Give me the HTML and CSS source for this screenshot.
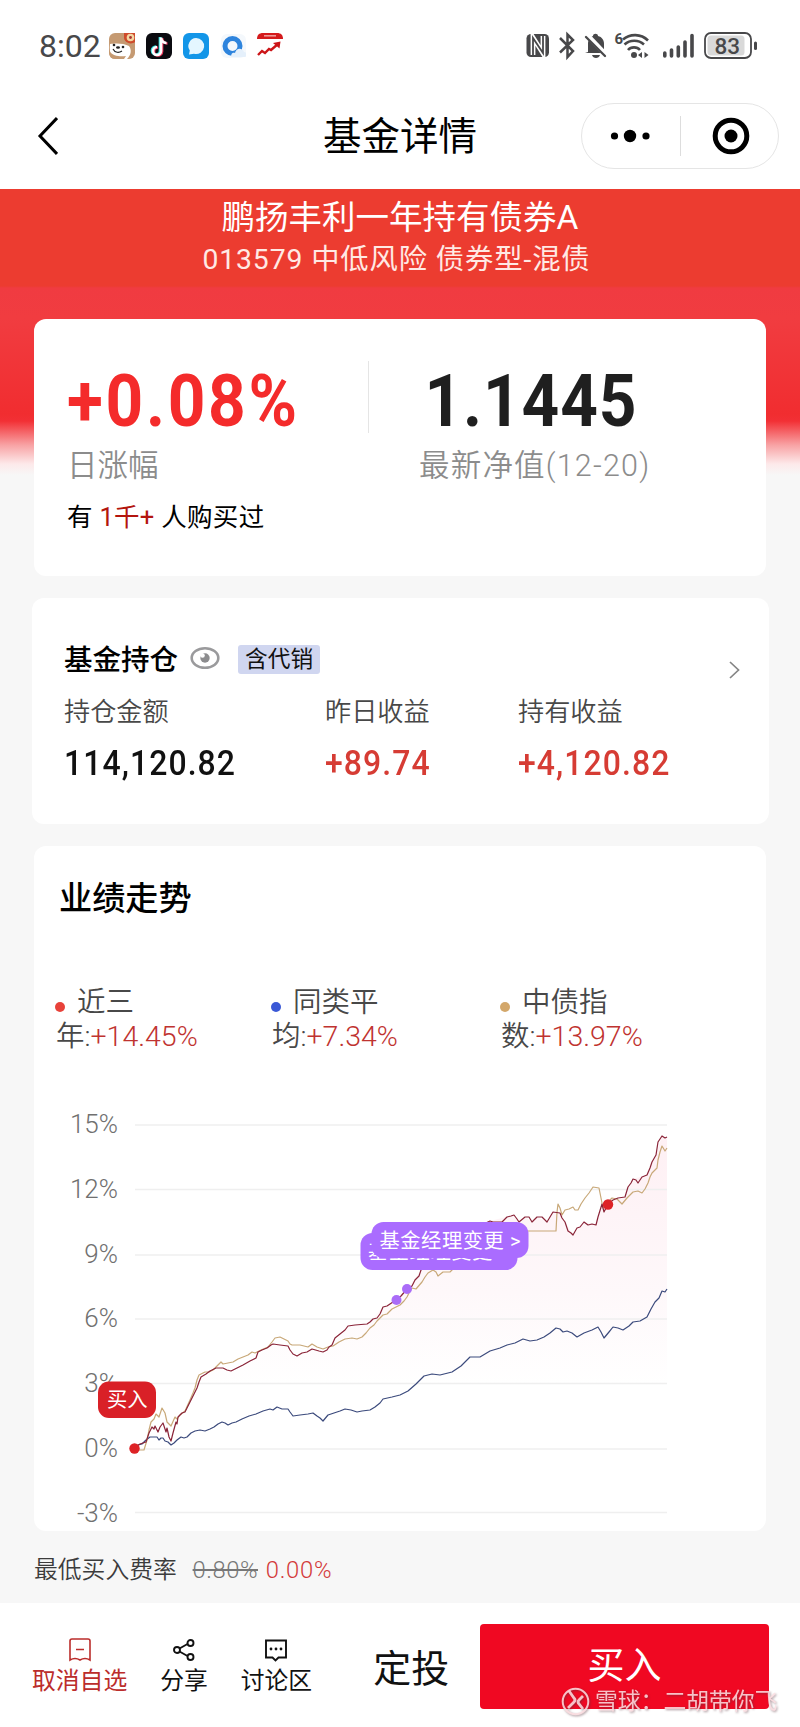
FILE: index.html
```html
<!DOCTYPE html>
<html lang="zh-CN">
<head>
  <meta charset="UTF-8" />
  <meta name="viewport" content="width=device-width, initial-scale=1.0"/>
  <title>基金详情</title>
  <link rel="stylesheet" href="styles.css">
</head>
<body>
  <div class="status">
    <span class="time">8:02</span>
    <div class="apps">
      <svg width="26" height="26" viewBox="0 0 26 26">
        <rect width="26" height="26" rx="6" fill="#c59a72"/>
        <path d="M1 11c5-1 14-1 19 2 3 4 2 9-2 13H7c-4-1-7-5-6-15z" fill="#fff"/>
        <path d="M0 18c4 5 11 6 17 5l-2 3H6c-4 0-6-3-6-8z" fill="#c59a72"/>
        <path d="M15 0h11v9c-4 3-10 1-11-4z" fill="#cf4a2b"/>
        <circle cx="21.500" cy="4.500" r="3.800" fill="#f3d6a0"/>
        <circle cx="21.500" cy="4.500" r="1.400" fill="#a33"/>
        <circle cx="5" cy="12" r="1.300" fill="#222"/><circle cx="14" cy="14" r="1.300" fill="#222"/>
        <ellipse cx="9" cy="14.500" rx="2" ry="1.300" fill="#222"/>
        <path d="M4 16c2 4 6 4 9 2" fill="none" stroke="#222" stroke-width="1.200"/>
      </svg>
      <svg width="26" height="26" viewBox="0 0 26 26">
        <rect width="26" height="26" rx="6" fill="#0b0b10"/>
        <g fill="none" stroke-width="2.700">
          <path d="M14 4v13.500a4 4 0 1 1-4-4M14 4c0 3 2.500 5.500 5.500 5.500" stroke="#35e0e0"/>
          <path d="M16 5v13.500a4 4 0 1 1-4-4M16 5c0 3 2.500 5.500 5.500 5.500" stroke="#f0355c"/>
          <path d="M15 4.500V18a4 4 0 1 1-4-4M15 4.500c0 3 2.500 5.500 5.500 5.500" stroke="#fff"/>
        </g>
      </svg>
      <svg width="26" height="26" viewBox="0 0 26 26">
        <rect width="26" height="26" rx="6" fill="#1396e8"/>
        <path d="M13 5a8 8 0 1 1-2 15.700L6 21.500l.800-4A8 8 0 0 1 13 5z" fill="#e4f6ff"/>
      </svg>
      <svg width="26" height="26" viewBox="0 0 26 26">
        <rect x="1" y="1" width="25" height="24" rx="6" fill="#f4f8fc"/>
        <circle cx="12.500" cy="13" r="7.500" fill="none" stroke="#2e84dd" stroke-width="5"/>
        <path d="M11 24c0-4 2-5 4-4 1-5 7-6 9-1 3 0 4 4 1 5z" fill="#e5f0fb"/>
      </svg>
      <svg width="26" height="26" viewBox="0 0 26 26">
        <path d="M0 6c0-4 2-6 6-6h14c4 0 6 2 6 6z" fill="#d41a1c"/>
        <path d="M7 2.800h12" stroke="#f1a3a0" stroke-width="1.500"/>
        <path d="M1 22l4-4 3 2 4-4 2 1 7-6" fill="none" stroke="#cc1518" stroke-width="2.400"/>
        <path d="M16 10l7.500-1.500-1 7z" fill="#cc1518"/>
      </svg>
    </div>
    <svg class="signals" width="234" height="32" viewBox="524 30 234 32">
      <rect x="526.500" y="34" width="22.500" height="23" rx="4.500" fill="#48484a"/>
      <path d="M533 55V37.500l10 16V36" fill="none" stroke="#fff" stroke-width="4.800"/>
      <path d="M533 56V38l10 15V35" fill="none" stroke="#48484a" stroke-width="1.800"/>
      <path d="M560 38l13 13-5.500 6V34.500l5.500 5.500-13 12.500" fill="none" stroke="#48484a" stroke-width="2.500"/>
      <path d="M588 52v-8c0-4 2-7 5-8 0-3 5-3 5 0 4 1 6 4 6 8v6l2 3h-21zM592 55h8c-1 4-7 4-8 0z" fill="#48484a"/>
      <path d="M587 35l20 21" stroke="#fff" stroke-width="5"/>
      <path d="M586 37l19 19" stroke="#48484a" stroke-width="2.300" stroke-linecap="round"/>
      <text x="614.500" y="44" class="wifi-gen">6</text>
      <g fill="none" stroke="#48484a" stroke-width="2.600">
        <path d="M623 39.500c7-6 18-6 25 1M624.500 44.500c5.500-5 14-5 19.500 0M628 50c3-3.500 9-3.500 12 0"/>
      </g>
      <circle cx="634" cy="55" r="3" fill="#48484a"/>
      <path d="M642 52v6l-4-3zM644.500 52v6l4-3z" fill="#48484a"/>
      <g stroke="#48484a" stroke-width="3.600" stroke-linecap="round">
        <path d="M664.800 53v3M671.500 50v6M678.300 47v9M685 42v14M692 35.500v20.500"/>
      </g>
      <rect x="705" y="33" width="46" height="25" rx="6" fill="#fff" stroke="#48484a" stroke-width="1.800"/>
      <rect x="707.500" y="35.500" width="37" height="20" rx="3.500" fill="#d9d9d9"/>
      <path d="M755.500 43v5.500" stroke="#48484a" stroke-width="3" stroke-linecap="round"/>
      <text x="714.500" y="54" class="battery">83</text>
    </svg>
  </div>

  <header class="nav">
    <svg class="back" width="22" height="40" viewBox="0 0 22 40"><path d="M21 2L4 20l17 18" fill="none" stroke="#000" stroke-width="3"/></svg>
    <h1>基金详情</h1>
    <div class="capsule">
      <svg width="40" height="14" viewBox="0 0 40 14"><circle cx="4.500" cy="7" r="3.600"/><circle cx="20" cy="7" r="6.200"/><circle cx="36" cy="7" r="3.600"/></svg>
      <span class="capsule-line"></span>
      <svg width="38" height="38" viewBox="0 0 38 38"><circle cx="19" cy="19" r="15.800" fill="none" stroke="#000" stroke-width="5"/><circle cx="19" cy="19" r="6.500"/></svg>
    </div>
  </header>

  <main>
    <div class="fund">
      <h2>鹏扬丰利一年持有债券A</h2>
      <p>013579 中低风险 债券型-混债</p>
    </div>

    <section class="card quote">
      <div class="quote-row">
        <div class="change">
          <strong>+0.08%</strong>
          <span>日涨幅</span>
        </div>
        <i class="quote-line"></i>
        <div class="net">
          <strong>1.1445</strong>
          <span>最新净值(12-20)</span>
        </div>
      </div>
      <p class="bought">有 <b>1千+</b> 人购买过</p>
    </section>

    <section class="card holding">
      <div class="holding-head">
        <h3>基金持仓</h3>
        <svg class="eye" width="30" height="24" viewBox="0 0 30 24">
          <ellipse cx="15" cy="12" rx="13.300" ry="9.800" fill="none" stroke="#9a9a9c" stroke-width="2.600"/>
          <circle cx="15" cy="12" r="4.700" fill="#8c8c8e"/><circle cx="12.500" cy="9.500" r="2.300" fill="#fff"/>
        </svg>
        <span class="tag">含代销</span>
      </div>
      <div class="holding-grid">
        <div><span>持仓金额</span><b>114,120.82</b></div>
        <div><span>昨日收益</span><b class="up">+89.74</b></div>
        <div><span>持有收益</span><b class="up">+4,120.82</b></div>
      </div>
      <svg class="more" width="12" height="18" viewBox="0 0 12 18"><path d="M2 1l8.500 8L2 17" fill="none" stroke="#858585" stroke-width="1.700"/></svg>
    </section>

    <section class="card trend">
      <h3>业绩走势</h3>
      <div class="legend">
        <p><i class="dot red"></i>近三<br>年:<b>+14.45%</b></p>
        <p><i class="dot blue"></i>同类平<br>均:<b>+7.34%</b></p>
        <p><i class="dot gold"></i>中债指<br>数:<b>+13.97%</b></p>
      </div>
      <svg class="chart" width="732" height="478" viewBox="34 1053 732 478">
        <defs>
          <linearGradient id="area" x1="0" y1="0" x2="0" y2="1">
            <stop offset="0" stop-color="#fef0f4"/>
            <stop offset=".5" stop-color="#fef8fa"/>
            <stop offset=".8" stop-color="#fff"/>
          </linearGradient>
        </defs>
        <path fill="url(#area)" d="M134 1448L146 1442 152 1427 163 1423 171 1441 178 1417 190 1402 201 1377 216 1368 231 1371 256 1358 273 1344 288 1346 297 1356 312 1349 323 1352 332 1345 348 1326 367 1324 383 1307 396 1300 407 1289 421 1270 450 1240 490 1221 514 1215 519 1222 525 1217 532 1222 537 1217 547 1222 553 1212 560 1213 573 1235 584 1222 596 1225 602 1204 625 1197 633 1179 647 1175 656 1155 662 1136 667 1138V1448z"/>
        <g stroke="#efefef" stroke-width="1.500">
          <path d="M135 1125H667M135 1189.500H667M135 1255H667M135 1319H667M135 1383.500H667M135 1449H667M135 1512.500H667"/>
        </g>
        <g class="axis">
          <text x="118" y="1133">15%</text>
          <text x="118" y="1198">12%</text>
          <text x="118" y="1263">9%</text>
          <text x="118" y="1327">6%</text>
          <text x="118" y="1392">3%</text>
          <text x="118" y="1457">0%</text>
          <text x="118" y="1522">-3%</text>
        </g>
        <polyline class="line-blue" points="134,1448 138,1445 142,1444 146,1440 150,1437 157,1437 159,1440 161,1438 163,1438 165,1441 168,1442 171,1445 174,1443 177,1440 181,1437 184,1438 187,1437 191,1433 195,1431 200,1430 205,1431 210,1429 214,1427 218,1424 222,1422 225,1423 228,1425 232,1423 236,1422 242,1419 249,1416 256,1414 263,1411 270,1409 273,1410 277,1407 282,1409 288,1409 290,1412 293,1416 300,1415 308,1414 313,1413 317,1416 320,1418 323,1421 328,1415 334,1413 340,1411 345,1409 351,1410 357,1412 362,1411 370,1410 375,1407 380,1403 383,1399 392,1397 400,1395 408,1391 416,1384 424,1376 432,1374 440,1375 452,1372 461,1366 470,1357 480,1357 490,1351 500,1348 507,1345 515,1343 523,1339 530,1341 537,1340 544,1337 550,1333 556,1328 560,1329 563,1332 567,1331 572,1333 577,1337 584,1333 592,1330 598,1327 601,1332 604,1338 609,1332 613,1327 618,1328 623,1330 629,1326 633,1322 640,1321 647,1317 651,1309 655,1302 659,1298 662,1291 665,1292 667,1289"/>
        <polyline class="line-gold" points="134,1448 139,1450 144,1450 147,1440 149,1430 151,1422 154,1419 156,1414 159,1417 162,1408 165,1413 167,1422 171,1426 175,1417 177,1419 180,1415 185,1411 190,1400 193,1393 195,1388 197,1380 199,1375 205,1372 209,1372 213,1370 217,1366 221,1362 223,1364 228,1363 233,1362 238,1359 243,1357 248,1355 252,1352 255,1353 261,1350 268,1347 272,1342 275,1338 280,1337 284,1339 288,1341 290,1344 292,1345 300,1345 308,1347 312,1344 317,1347 323,1349 328,1347 333,1346 339,1342 345,1339 352,1338 357,1339 362,1337 366,1333 370,1328 374,1325 377,1321 383,1315 387,1314 392,1309 400,1305 404,1301 407,1297 410,1291 412,1288 416,1289 422,1282 425,1277 428,1273 433,1270 436,1272 438,1276 443,1272 450,1272 455,1267 490,1231 556,1231 557,1212 558,1204 560,1208 562,1215 565,1210 569,1209 573,1207 575,1210 578,1210 581,1204 585,1198 589,1193 593,1187 599,1188 601,1198 603,1208 607,1203 612,1198 617,1199 622,1204 627,1198 633,1192 638,1191 642,1193 645,1189 648,1183 650,1177 652,1173 657,1168 658,1160 660,1152 662,1146 665,1151 667,1148"/>
        <polyline class="line-red" points="134,1448 140,1444 146,1442 149,1433 152,1427 154,1429 155,1426 158,1432 160,1427 163,1423 166,1432 167,1428 169,1437 171,1441 173,1433 176,1422 177,1424 178,1417 182,1413 185,1412 187,1408 190,1402 194,1394 197,1388 199,1382 201,1377 206,1374 210,1371 216,1368 223,1368 227,1370 231,1371 237,1368 243,1365 250,1361 256,1358 258,1352 262,1350 267,1348 271,1345 273,1344 280,1345 288,1346 290,1350 293,1354 297,1356 302,1353 307,1352 312,1349 319,1351 323,1352 327,1350 329,1347 332,1345 335,1338 340,1334 345,1330 348,1326 355,1325 367,1324 370,1322 373,1319 377,1318 380,1314 383,1307 387,1306 390,1304 396,1300 401,1296 407,1289 412,1286 415,1280 419,1276 421,1270 428,1262 450,1240 490,1221 493,1222 502,1222 507,1217 511,1216 514,1215 517,1219 519,1222 525,1217 529,1217 532,1222 537,1217 542,1217 547,1222 550,1217 553,1212 560,1213 562,1218 565,1222 568,1231 571,1233 573,1235 577,1228 580,1227 584,1222 588,1225 592,1224 596,1225 598,1217 602,1204 604,1212 608,1204 613,1200 618,1198 625,1197 628,1187 631,1183 633,1179 636,1180 638,1183 642,1177 647,1175 650,1168 652,1162 656,1155 658,1142 662,1136 665,1138 667,1137"/>
        <circle cx="396.500" cy="1300" r="5" fill="#aa6cf8"/>
        <circle cx="407" cy="1289" r="5" fill="#aa6cf8"/>
        <circle cx="608" cy="1204.500" r="5.200" fill="#dd2226"/>
        <circle cx="134.500" cy="1448.500" r="5.200" fill="#dd2226"/>
        <rect x="360.500" y="1233" width="157" height="37" rx="12" fill="#aa6cff"/>
        <text class="pill" x="368" y="1258.500" textLength="141">基金经理变更 &gt;</text>
        <rect x="371.500" y="1222" width="157" height="36" rx="12" fill="#aa6cff"/>
        <text class="pill" x="379.500" y="1247.500" textLength="141">基金经理变更 &gt;</text>
        <rect x="98" y="1381.500" width="58" height="36.500" rx="11" fill="#d92027"/>
        <text class="pill" x="107" y="1407">买入</text>
      </svg>
    </section>

    <p class="fee">最低买入费率 <del>0.80%</del> <b>0.00%</b></p>
  </main>

  <footer class="bar">
    <a class="act fav">
      <svg width="24" height="26" viewBox="0 0 24 26"><path d="M4 2h16q2 0 2 2v19q-5-3-10 0-5-3-10 0V4q0-2 2-2zM8 12.500h8" fill="none" stroke="currentColor" stroke-width="1.600"/></svg>
      取消自选
    </a>
    <a class="act share">
      <svg width="24" height="26" viewBox="0 0 24 26"><g fill="none" stroke="currentColor" stroke-width="1.900"><path d="M7.500 11.500l8-4.500M7.500 14.500l8 4.500"/><circle cx="5" cy="13" r="3"/><circle cx="18.500" cy="6" r="3"/><circle cx="18.500" cy="20" r="3"/></g></svg>
      分享
    </a>
    <a class="act talk">
      <svg width="24" height="26" viewBox="0 0 24 26"><path d="M2 3.500h20v17h-7.500l-3 3-3-3H2z" fill="none" stroke="currentColor" stroke-width="1.900"/><g fill="currentColor"><circle cx="7" cy="12" r="1.400"/><circle cx="12" cy="12" r="1.400"/><circle cx="17" cy="12" r="1.400"/></g></svg>
      讨论区
    </a>
    <a class="plan">定投</a>
    <button class="buy">买入</button>
    <div class="watermark">
      <svg width="29" height="29" viewBox="0 0 29 29"><g fill="none" stroke="currentColor" stroke-width="2"><circle cx="14.500" cy="14.500" r="12.800"/><path d="M8 4l5 7q2 2 0 4l-6 6M22 9l-4 4q-2 2 0 4l4 5" stroke-width="2.800"/></g></svg>
      <span>雪球：二胡带你飞</span>
    </div>
  </footer>
</body>
</html>
```
FILE: styles.css
```css
* {
  box-sizing: border-box;
}
body {
  margin: 0;
  width: 800px;
  background: #f7f7f7;
  color: #111;
  font-family: Roboto, "Noto Sans CJK SC", sans-serif;
}
h1, h2, h3, p {
  margin: 0;
  font-weight: 400;
}
b, i {
  font-weight: 400;
  font-style: normal;
}
svg {
  display: block;
  flex-shrink: 0;
}

/* status bar */
.status {
  display: flex;
  align-items: center;
  height: 92px;
  padding: 0 42px 0 39px;
  background: #fff;
}
.time {
  width: 70px;
  font-size: 32px;
  color: #48484a;
  line-height: 40px;
}
.apps {
  display: flex;
  gap: 10.900px;
}
.signals {
  margin-left: auto;
}
.wifi-gen {
  font-size: 15px;
  font-weight: 700;
  fill: #48484a;
}
.battery {
  font-size: 22.500px;
  font-weight: 500;
  fill: #48484a;
}

/* nav */
.nav {
  display: grid;
  grid-template-columns: 198px 1fr 198px;
  align-items: center;
  height: 97px;
  padding: 0 21px 10px 36px;
  background: #fff;
}
.nav h1 {
  padding: 2px 15px 0 0;
  text-align: center;
  font-size: 38.500px;
  line-height: 50px;
  color: #000;
}
.capsule {
  display: flex;
  align-items: center;
  width: 198px;
  height: 66px;
  padding: 0 28px;
  border: 1px solid #e5e5e5;
  border-radius: 33px;
}
.capsule-line {
  width: 1px;
  height: 40px;
  margin: 0 31px 0 30px;
  background: #ddd;
}

/* fund name */
main {
  padding: 0 34px;
  background: linear-gradient(#ec3c30 0, #ec3c30 97px, #f03b41 99px, #f13c40 130px, #f12d30 225px, #f23035 232px, #f8a2a4 256px, #fde9ea 275px, #f7f7f7 286px);
}
.fund {
  height: 130px;
  padding-top: 6px;
  text-align: center;
  color: #fff;
}
.fund h2 {
  font-size: 33.500px;
  line-height: 45px;
}
.fund p {
  padding-right: 7px;
  font-size: 28.300px;
  line-height: 40px;
  letter-spacing: .900px;
  color: #ffe9e4;
}

/* cards */
.card {
  border-radius: 12px;
  background: #fff;
}
.quote {
  height: 257px;
  padding: 42px 33px 0;
}
.quote-row {
  display: flex;
}
.quote strong {
  display: block;
  margin-bottom: 3px;
  font-size: 73px;
  font-weight: 700;
  line-height: 80px;
  white-space: nowrap;
  transform: scaleX(.900);
  transform-origin: left;
}
.quote span {
  display: block;
  font-size: 30.500px;
  font-weight: 350;
  line-height: 44px;
  color: #8c8c8c;
}
.change {
  width: 301px;
}
.change strong {
  color: #f42b2b;
  letter-spacing: 3px;
}
.quote-line {
  width: 1px;
  height: 72px;
  background: #e5e5e5;
}
.net {
  padding-left: 50px;
}
.net strong {
  padding-left: 6px;
  color: #1f1f1f;
  letter-spacing: 1px;
}
.net span {
  letter-spacing: 1.200px;
}
.bought {
  margin-top: 9px;
  font-size: 25.500px;
  line-height: 40px;
  letter-spacing: .300px;
  color: #000;
}
.bought b {
  color: #b3150e;
}

/* holding */
.holding {
  display: grid;
  grid-template-columns: 1fr 12px;
  align-content: start;
  height: 226px;
  margin: 22px -3px 22px -2px;
  padding: 41px 29px 0 32px;
}
.holding-head {
  display: flex;
  align-items: center;
  height: 40px;
}
.holding h3 {
  padding-bottom: 4px;
  font-size: 28.500px;
  font-weight: 500;
  color: #000;
}
.eye {
  margin: -2px 18px 0 12px;
}
.tag {
  padding: 0 7px;
  border-radius: 3px;
  background: #d0d6f0;
  font-size: 22.700px;
  line-height: 29px;
}
.more {
  grid-column: 2;
  grid-row: 1;
  align-self: end;
}
.holding-grid {
  display: grid;
  grid-template-columns: 261px 193px 1fr;
  grid-column: 1;
  margin-top: 16px;
}
.holding-grid span {
  display: block;
  font-size: 26.200px;
  font-weight: 350;
  line-height: 34px;
  color: #484848;
}
.holding-grid b {
  display: block;
  margin-top: 14px;
  font-size: 35.500px;
  font-weight: 500;
  line-height: 40px;
  letter-spacing: 1.200px;
  white-space: nowrap;
  transform: scaleX(.900);
  transform-origin: left;
}
.holding-grid .up {
  color: #d63c34;
}

/* trend */
.trend {
  height: 685px;
  padding-top: 31px;
}
.trend h3 {
  padding-left: 25px;
  font-size: 33.200px;
  font-weight: 500;
  line-height: 44px;
  color: #000;
}
.legend {
  display: grid;
  grid-template-columns: 216px 229px 1fr;
  margin-top: 65px;
  padding-left: 22px;
}
.legend p {
  font-size: 28.500px;
  font-weight: 350;
  line-height: 34px;
  color: #484848;
}
.legend b {
  font-weight: 350;
  color: #bf3330;
}
.dot {
  display: inline-block;
  width: 10px;
  height: 10px;
  margin: 0 12px 0 -1px;
  border-radius: 50%;
}
.dot.red {
  background: #e8423a;
}
.dot.blue {
  background: #3a58d6;
}
.dot.gold {
  background: #d3a76a;
}
.axis {
  font-size: 26px;
  font-weight: 350;
  fill: #707070;
  text-anchor: end;
}
.chart {
  margin-top: -1px;
}
.chart polyline {
  fill: none;
  stroke-width: 1.200;
  stroke-linejoin: round;
}
.chart .line-red {
  stroke: #8a2438;
}
.chart .line-blue {
  stroke: #3b4a7c;
}
.chart .line-gold {
  stroke: #c8a878;
}
.pill {
  font-size: 20.300px;
  fill: #fff;
}
.fee {
  height: 72px;
  padding-top: 20px;
  font-size: 23.800px;
  font-weight: 350;
  line-height: 38px;
  color: #3c3c3c;
}
.fee del {
  margin-left: 10px;
  letter-spacing: .500px;
  color: #777;
}
.fee b {
  margin-left: 2px;
  font-weight: 350;
  letter-spacing: .700px;
  color: #d33a3a;
}

/* bottom bar */
.bar {
  position: relative;
  display: flex;
  height: 124px;
  padding: 21px 31px 0 32px;
  background: #fff;
}
.act {
  display: flex;
  flex-direction: column;
  align-items: center;
  gap: 1px;
  padding-top: 13px;
  font-size: 23.800px;
  line-height: 34px;
  white-space: nowrap;
}
.fav {
  color: #bb2d2b;
}
.share {
  margin-left: 33px;
}
.talk {
  margin-left: 33px;
}
.plan {
  margin-left: 61px;
  font-size: 38px;
  line-height: 90px;
}
.buy {
  width: 289px;
  height: 85px;
  margin-left: auto;
  padding: 0 0 8px;
  border: none;
  border-radius: 4px;
  background: #f00822;
  color: #fff;
  font: inherit;
  font-size: 37px;
}
.watermark {
  position: absolute;
  top: 84px;
  left: 561px;
  display: flex;
  align-items: center;
  gap: 5px;
  color: rgba(255, 225, 228, .85);
  font-size: 22.800px;
  line-height: 29px;
  white-space: nowrap;
  filter: drop-shadow(1px 1px 1px rgba(90, 50, 60, .6));
}
```
